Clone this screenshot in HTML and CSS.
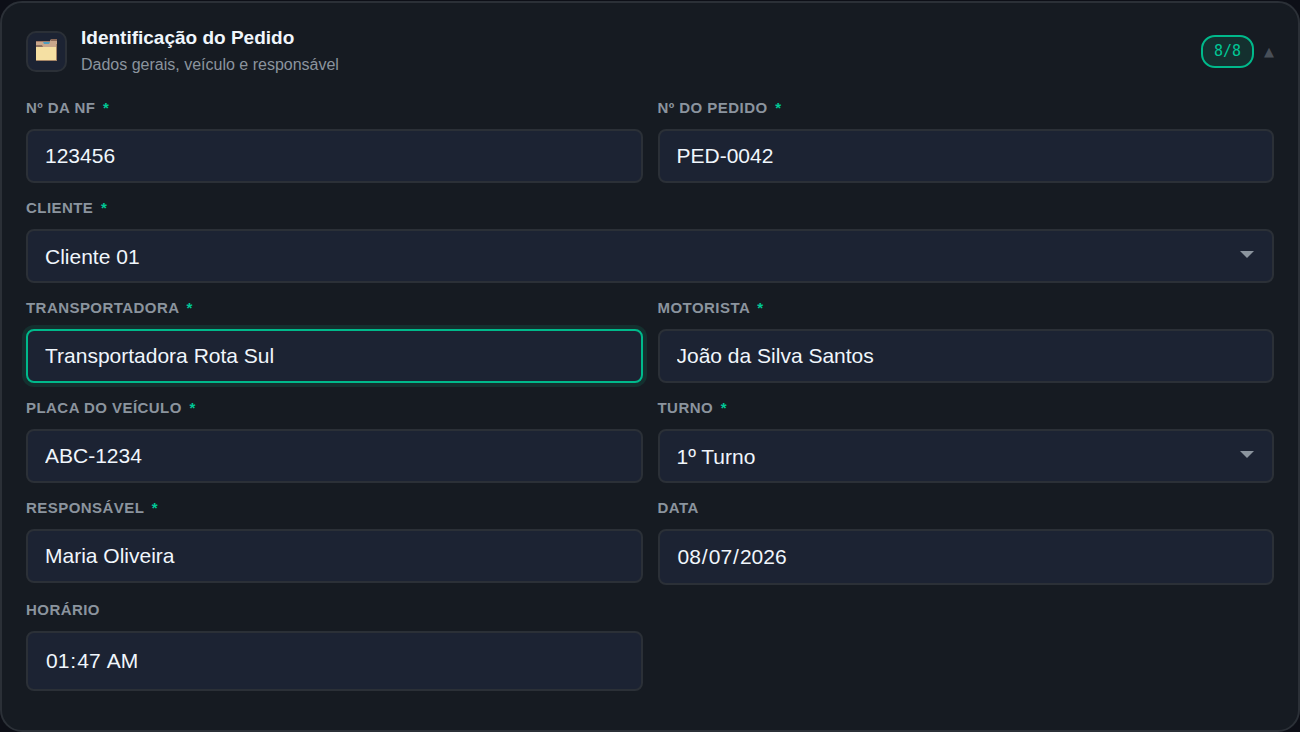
FILE: index.html
```html
<!DOCTYPE html>
<html lang="pt-BR">
<head>
  <meta charset="UTF-8" />
  <meta name="viewport" content="width=device-width, initial-scale=1.0" />
  <title>Identificação do Pedido</title>
  <link rel="stylesheet" href="styles.css">
</head>
<body>

<section class="card">
  <header class="card-header">
    <div class="card-icon">
      <svg width="24" height="24" viewBox="0 0 24 24" aria-hidden="true">
        <path d="M1 2h14l1-2h6v22H1z" fill="#c9a78c"/>
        <path d="M1 2h14v1H1z" fill="#a07a68"/>
        <path d="M16 0h6v2h-6z" fill="#8c6a58"/>
        <path d="M8 3h7l-1 2H9z" fill="#4f9fc0"/>
        <path d="M1 6h6l1 2H1z" fill="#8c6f5e"/>
        <path d="M1 8h20v13H1z" fill="#f5e0a3"/>
        <path d="M21 5h1v17h-1z" fill="#a58566"/>
        <path d="M1 21h21v1H1z" fill="#a58566"/>
      </svg>
    </div>
    <div class="card-heading">
      <h2 class="card-title">Identificação do Pedido</h2>
      <p class="card-sub">Dados gerais, veículo e responsável</p>
    </div>
    <div class="card-status">
      <span class="badge">8/8</span>
      <button type="button" class="toggle" aria-label="Recolher">▲</button>
    </div>
  </header>

  <form class="grid">
    <div class="field">
      <label for="nf">Nº da NF <span class="req">*</span></label>
      <input type="text" id="nf" value="123456" />
    </div>
    <div class="field">
      <label for="pedido">Nº do Pedido <span class="req">*</span></label>
      <input type="text" id="pedido" value="PED-0042" />
    </div>
    <div class="field full">
      <label for="cliente">Cliente <span class="req">*</span></label>
      <div class="select">
        <select id="cliente"><option>Cliente 01</option></select>
      </div>
    </div>
    <div class="field">
      <label for="transportadora">Transportadora <span class="req">*</span></label>
      <input type="text" id="transportadora" class="active" value="Transportadora Rota Sul" />
    </div>
    <div class="field">
      <label for="motorista">Motorista <span class="req">*</span></label>
      <input type="text" id="motorista" value="João da Silva Santos" />
    </div>
    <div class="field">
      <label for="placa">Placa do Veículo <span class="req">*</span></label>
      <input type="text" id="placa" value="ABC-1234" />
    </div>
    <div class="field">
      <label for="turno">Turno <span class="req">*</span></label>
      <div class="select">
        <select id="turno"><option>1º Turno</option></select>
      </div>
    </div>
    <div class="field">
      <label for="responsavel">Responsável <span class="req">*</span></label>
      <input type="text" id="responsavel" value="Maria Oliveira" />
    </div>
    <div class="field">
      <label for="data">Data</label>
      <input type="date" id="data" value="2026-08-07" />
    </div>
    <div class="field">
      <label for="horario">Horário</label>
      <input type="time" id="horario" value="01:47" />
    </div>
  </form>
</section>

</body>
</html>
```

FILE: styles.css
```css
* {
  box-sizing: border-box;
}

body {
  margin: 0;
  padding: 1px 0 0;
  min-height: 100vh;
  display: flex;
  background-color: #0d0f17;
  color: #f0f6fc;
  font-family: "Liberation Sans", Arial, sans-serif;
}

.card {
  flex: 1;
  padding: 23px 24px;
  background-color: #161b22;
  border: 2px solid #2b3037;
  border-radius: 22px;
}

.card-header {
  display: flex;
  align-items: center;
  gap: 14px;
  margin-bottom: 22px;
}

.card-icon {
  display: flex;
  align-items: center;
  justify-content: center;
  width: 41px;
  height: 41px;
  background-color: #1c2333;
  border: 2px solid #2b3037;
  border-radius: 10px;
}

.card-heading {
  flex: 1;
}

.card-title {
  margin: 0 0 4px;
  font-size: 19px;
  line-height: 24px;
}

.card-sub {
  margin: 0;
  color: #8b949e;
  font-size: 16px;
  line-height: 22px;
}

.card-status {
  display: flex;
  align-items: center;
  gap: 10px;
}

.badge {
  padding: 0 11px;
  background-color: #14302f;
  border: 2px solid #00b98b;
  border-radius: 14px;
  color: #00c896;
  font-family: "DejaVu Sans Mono", monospace;
  font-size: 15px;
  line-height: 29px;
}

.toggle {
  padding: 0;
  background: none;
  border: none;
  color: #484f58;
  font-family: "DejaVu Sans", sans-serif;
  font-size: 13px;
  cursor: pointer;
}

.grid {
  display: grid;
  grid-template-columns: 1fr 1fr;
  align-items: start;
  gap: 15px;
}

.full {
  grid-column: 1 / -1;
}

.field label {
  display: block;
  margin-bottom: 12px;
  color: #8b949e;
  font-size: 15px;
  font-weight: bold;
  line-height: 19px;
  letter-spacing: 0.03em;
  text-transform: uppercase;
}

.req {
  margin-left: 3px;
  color: #00c896;
}

input, select {
  display: block;
  width: 100%;
  height: 54px;
  margin: 0;
  padding: 0 17px;
  appearance: none;
  background-color: #1c2333;
  border: 2px solid #2b3037;
  border-radius: 8px;
  outline: none;
  color: #f0f6fc;
  font-family: inherit;
  font-size: 21px;
}

input[type="date"] {
  height: 56px;
}

input[type="time"] {
  height: 60px;
}

input::-webkit-calendar-picker-indicator {
  opacity: 0;
}

input:focus, select:focus, .active {
  border-color: #00b98b;
  box-shadow: 0 0 0 4px #14302f;
}

.select {
  position: relative;
}

/* dropdown arrow */
.select::after {
  content: "";
  position: absolute;
  right: 20px;
  top: 22px;
  border: 7px solid transparent;
  border-top-color: #8b949e;
  border-bottom: none;
  pointer-events: none;
}
```
